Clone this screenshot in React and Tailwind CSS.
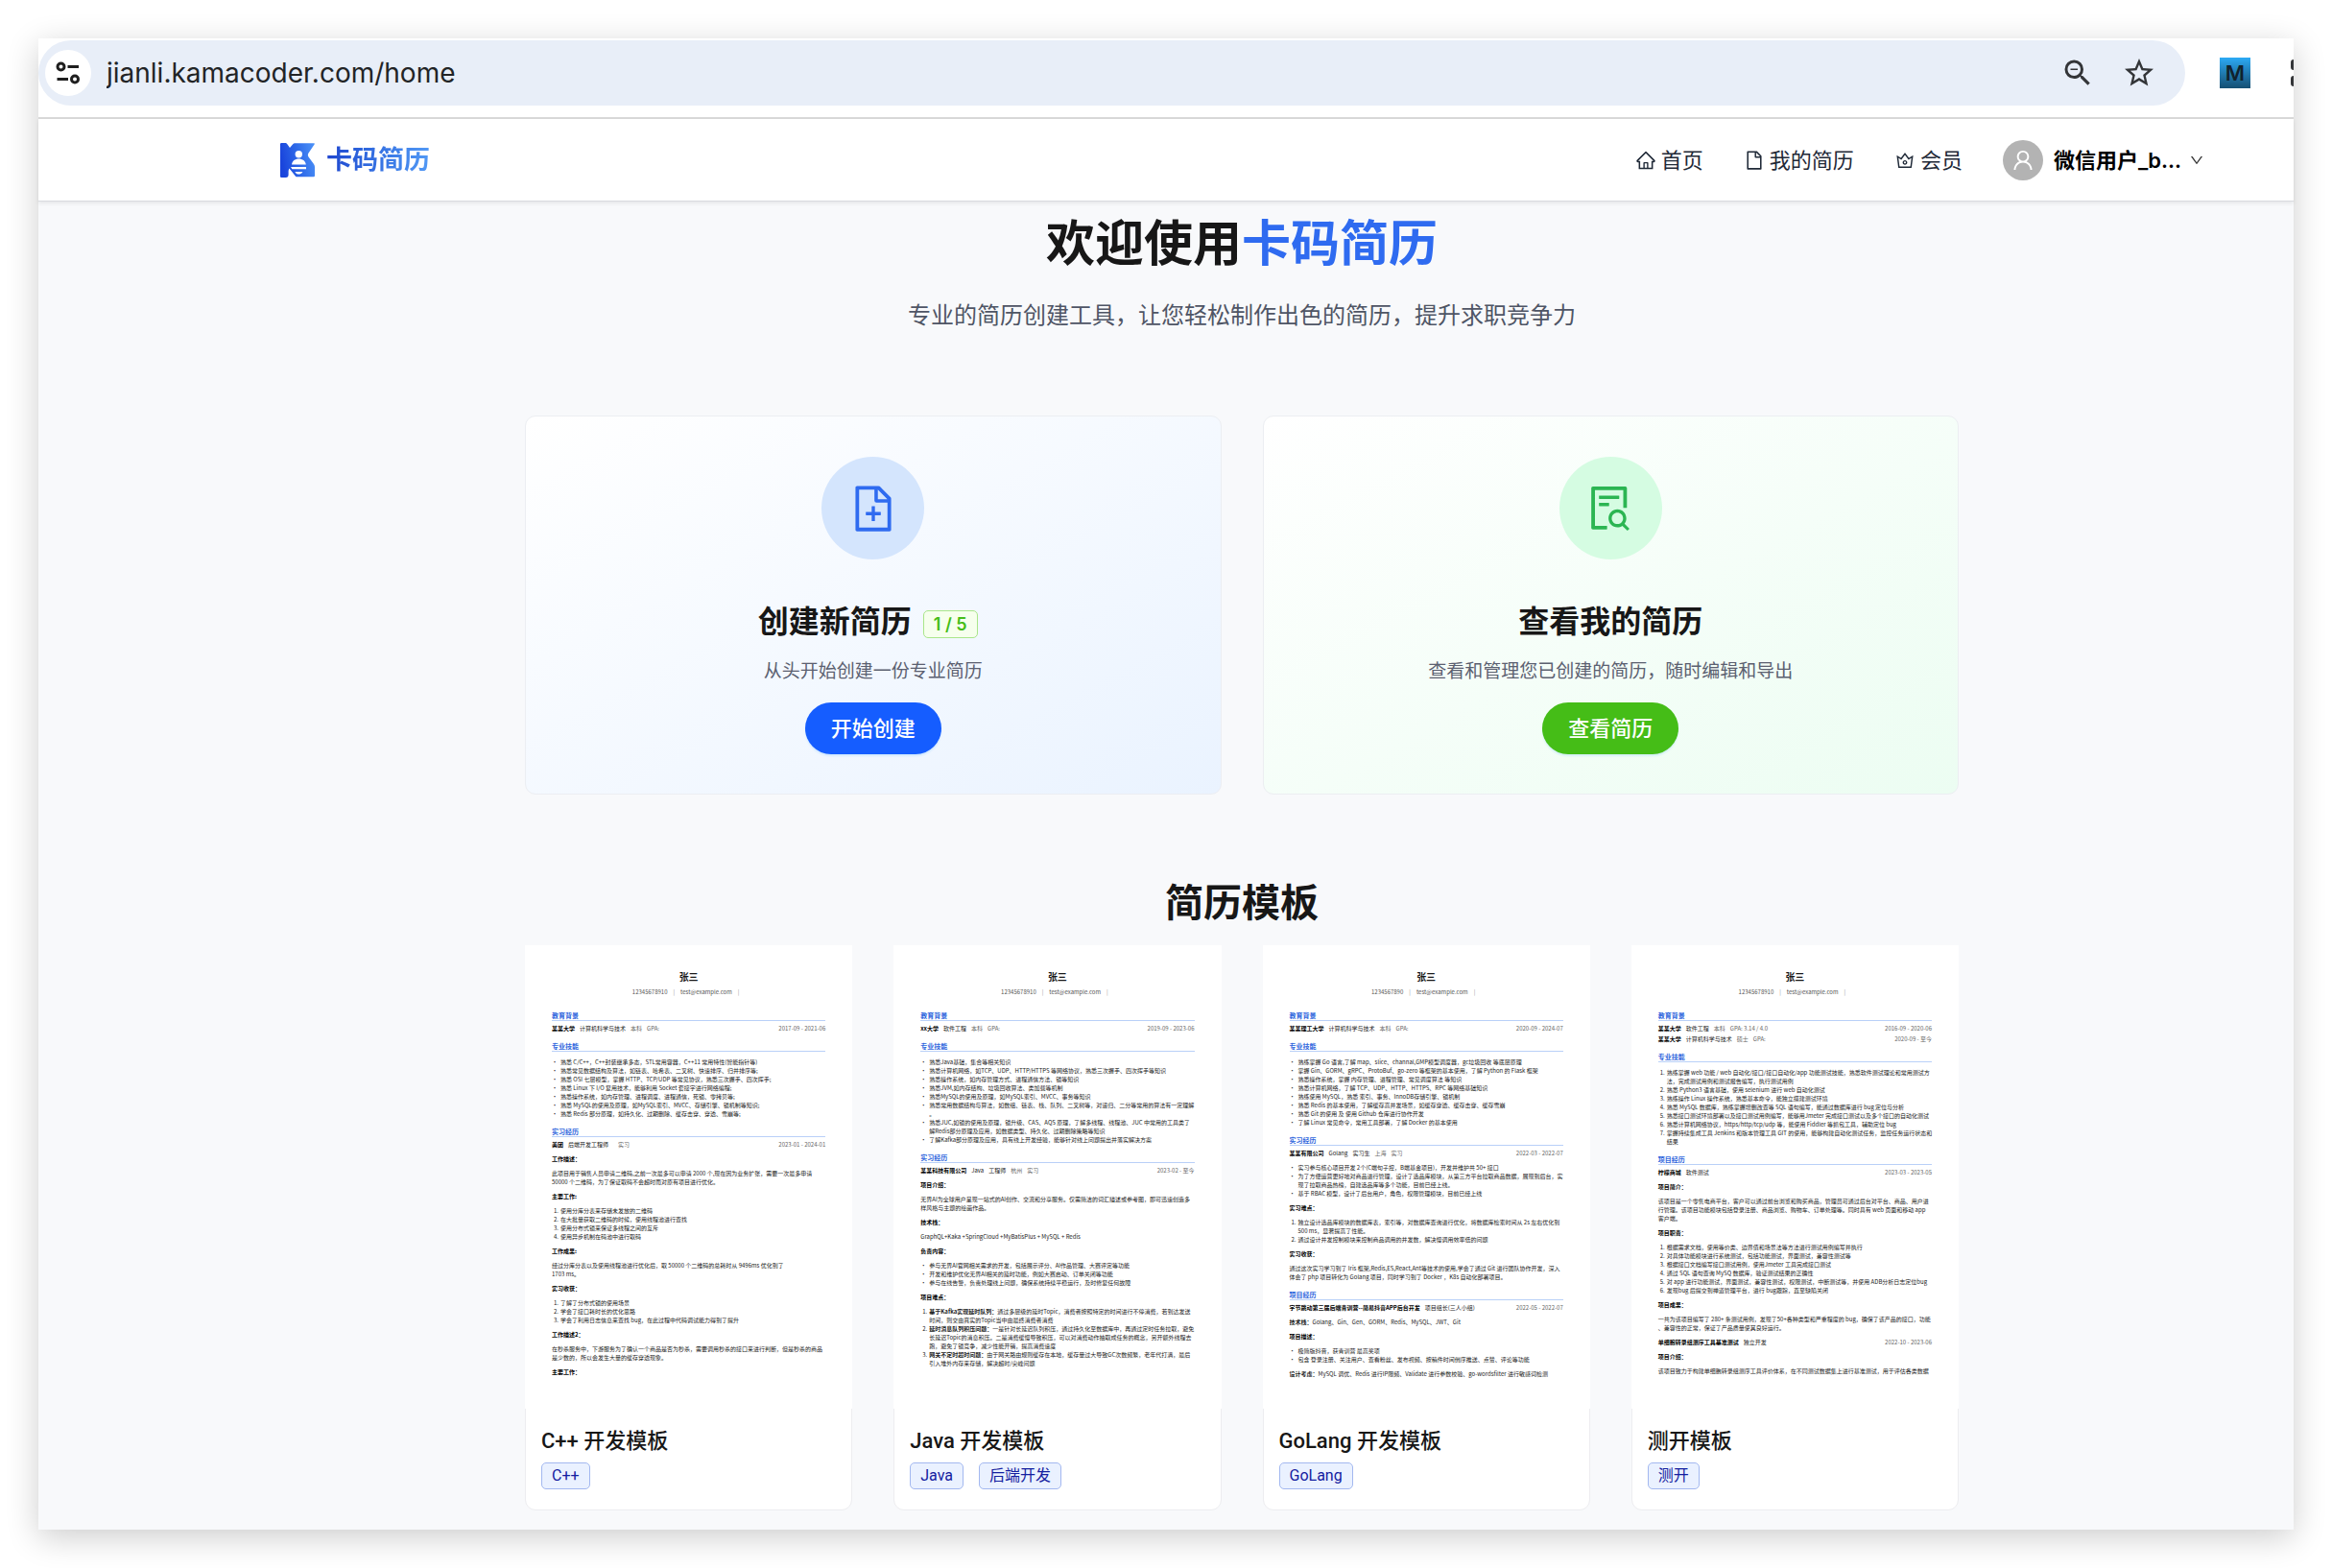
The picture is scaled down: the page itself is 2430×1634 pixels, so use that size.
import React from "react";
import {
  AiOutlineHome,
  AiOutlineFile,
  AiOutlineCrown,
  AiOutlineUser,
  AiOutlineDown,
  AiOutlineFileAdd,
  AiOutlineFileSearch,
} from "react-icons/ai";
import { MdOutlineZoomOut, MdStarBorder } from "react-icons/md";

const templates = [
  {
    name: "C++ 开发模板",
    tags: ["C++"],
    phone: "12345678910",
    sections: [
      {
        title: "教育背景",
        blocks: [
          { rows: [{ strong: "某某大学", main: ["计算机科学与技术"], soft: ["本科", "GPA:"], date: "2017-09 - 2021-06" }] },
        ],
      },
      {
        title: "专业技能",
        blocks: [
          {
            ul: [
              "熟悉 C/C++，C++封装继承多态，STL常用容器，C++11 常用特性(智能指针等)",
              "熟悉常见数据结构及算法，如链表、哈希表、二叉树、快速排序、归并排序等;",
              "熟悉 OSI 七层模型，掌握 HTTP、TCP/UDP 等常见协议，熟悉三次握手、四次挥手;",
              "熟悉 Linux 下 I/O 复用技术，能够利用 Socket 套接字进行网络编程;",
              "熟悉操作系统，如内存管理、进程调度、进程通信，死锁、零拷贝等;",
              "熟悉 MySQL的使用及原理，如MySQL索引、MVCC、存储引擎、锁机制等知识;",
              "熟悉 Redis 部分原理，如持久化、过期删除、缓存击穿、穿透、雪崩等;",
            ],
          },
        ],
      },
      {
        title: "实习经历",
        blocks: [
          { rows: [{ strong: "美团", main: ["后端开发工程师"], soft: ["", "实习"], date: "2023-01 - 2024-01" }] },
          { b: "工作描述：" },
          { p: ["此项目用于销售人员申请二维码,之前一次最多可以申请 2000 个,现在因为业务扩张，需要一次最多申请", "50000 个二维码，为了保证取码不会超时而对原有项目进行优化。"] },
          { b: "主要工作:" },
          { ol: ["使用分库分表来存储未发放的二维码", "在大批量获取二维码的时候，使用线程池进行查找", "使用分布式锁来保证多线程之间的互斥", "使用异步机制在码池中进行取码"] },
          { b: "工作成果:" },
          { p: ["经过分库分表以及使用线程池进行优化后，取 50000 个二维码的总耗时从 9496ms 优化到了", "1703 ms。"] },
          { b: "实习收获：" },
          { ol: ["了解了分布式锁的使用场景", "学会了接口耗时长的优化思路", "学会了利用日志信息来查找 bug，在此过程中代码调试能力得到了提升"] },
          { b: "工作描述2：" },
          { p: ["在秒杀服务中，下游服务为了确认一个商品是否为秒杀，需要调用秒杀的接口来进行判断，但是秒杀的商品", "是少数的，所以会发生大量的缓存穿透现象。"] },
          { b: "主要工作：" },
        ],
      },
    ],
  },
  {
    name: "Java 开发模板",
    tags: ["Java", "后端开发"],
    phone: "12345678910",
    sections: [
      {
        title: "教育背景",
        blocks: [
          { rows: [{ strong: "xx大学", main: ["软件工程"], soft: ["本科", "GPA:"], date: "2019-09 - 2023-06" }] },
        ],
      },
      {
        title: "专业技能",
        blocks: [
          {
            ul: [
              "熟悉Java基础，集合等相关知识",
              "熟悉计算机网络，如TCP、UDP、HTTP/HTTPS 等网络协议，熟悉三次握手、四次挥手等知识",
              "熟悉操作系统，如内存管理方式、进程通信方法、锁等知识",
              "熟悉JVM,如内存结构、垃圾回收算法、类加载等机制",
              "熟悉MySQL的使用及原理，如MySQL索引、MVCC、事务等知识",
              ["熟悉常用数据结构与算法，如数组、链表、栈、队列、二叉树等，对递归、二分等常用的算法有一定理解", "。"],
              ["熟悉JUC,如锁的使用及原理，锁升级、CAS、AQS 原理，了解多线程、线程池、JUC 中常用的工具类了", "解Redis部分原理及应用，如数据类型、持久化、过期删除策略等知识"],
              "了解Kafka部分原理及应用，具有线上开发经验，能够针对线上问题提出并落实解决方案",
            ],
          },
        ],
      },
      {
        title: "实习经历",
        blocks: [
          { rows: [{ strong: "某某科技有限公司", main: ["Java", "工程师"], soft: ["杭州", "实习"], date: "2023-02 - 至今" }] },
          { b: "项目介绍：" },
          { p: ["无界AI为全球用户呈现一站式的AI创作、交流和分享服务。仅需简洁的词汇描述或参考图，即可迅速创造多", "样风格与主题的绘画作品。"] },
          { b: "技术栈：" },
          { p: ["GraphQL+Kaka +SpringCloud +MyBatisPlus + MySQL + Redis"] },
          { b: "负责内容：" },
          { ul: ["参与无界AI官网相关需求的开发，包括展示评分、AI作品管理、大赛评定等功能", "开发和维护优化无界AI相关的延时功能，例如大赛启动、订单关闭等功能", "参与在线告警，负责处理线上问题，确保系统持续平稳运行，及时修复任何故障"] },
          { b: "项目难点：" },
          {
            ol: [
              { lead: "基于Kafka实现延时队列：", lines: ["通过多层级的延时Topic，消费者按照特定的时间进行不停消费，若到达发送", "时间，则交由真实的Topic当中由最终消费者消费"] },
              { lead: "延时消息队列积压问题：", lines: ["一是针对长延迟队列积压，通过持久化至数据库中，再通过定时任务拉取，避免", "长延迟Topic的消息积压。二是消费缓慢导致积压，可以对消费动作抽取成任务的概念，另开额外线程去", "跑，避免了锁竞争，减少性能开销，提高消费速度"] },
              { lead: "网关不定时超时问题：", lines: ["由于网关路由规则缓存在本地，缓存量过大导致GC次数频繁，老年代打满，最后", "引入堆外内存来存储，解决超时/尖峰问题"] },
            ],
          },
        ],
      },
    ],
  },
  {
    name: "GoLang 开发模板",
    tags: ["GoLang"],
    phone: "1234567890",
    sections: [
      {
        title: "教育背景",
        blocks: [
          { rows: [{ strong: "某某理工大学", main: ["计算机科学与技术"], soft: ["本科", "GPA:"], date: "2020-09 - 2024-07" }] },
        ],
      },
      {
        title: "专业技能",
        blocks: [
          {
            ul: [
              "熟练掌握 Go 语言,了解 map、slice、channal,GMP模型调度器，gc垃圾回收 等底层原理",
              "掌握 Gin、GORM、gRPC、ProtoBuf、go-zero 等框架的基本使用，了解 Python 的 Flask 框架",
              "熟悉操作系统，掌握 内存管理、进程管理、常见调度算法 等知识",
              "熟悉计算机网络，了解 TCP、UDP、HTTP、HTTPS、RPC 等网络基础知识",
              "熟练使用 MySQL，熟悉 索引、事务、InnoDB存储引擎、锁机制",
              "熟悉 Redis 的基本使用，了解缓存高并发场景，如缓存穿透、缓存击穿、缓存雪崩",
              "熟悉 Git 的使用 及 使用 Github 仓库进行协作开发",
              "了解 Linux 常见命令，常用工具部署，了解 Docker 的基本使用",
            ],
          },
        ],
      },
      {
        title: "实习经历",
        blocks: [
          { rows: [{ strong: "某某有限公司", main: ["Golang", "实习生"], soft: ["上海", "实习"], date: "2022-03 - 2022-07" }] },
          {
            ul: [
              "实习参与核心项目开发 2个(C端句子控，B端基金项目)，开发并维护共 50+ 接口",
              ["为了方便运营更好地对商品进行管理，设计了选品库模块，从第三方平台拉取商品数据，展现到后台，实", "现了拉取商品热榜，自建选品库等多个功能，目前已经上线。"],
              "基于 RBAC 模型，设计了后台用户，角色，权限管理模块，目前已经上线",
            ],
          },
          { b: "实习难点：" },
          { ol: [["独立设计选品库模块的数据库表，索引等，对数据库查询进行优化，将数据库检索时间从 2s 左右优化到", "500 ms，显著提高了性能。"], "通过设计并发控制模块来控制商品调用的并发数，解决慢调用效率低的问题"] },
          { b: "实习收获：" },
          { p: ["通过这次实习学习到了 Iris 框架,Redis,ES,React,Ant等技术的使用,学会了通过 Git 进行团队协作开发，深入", "体会了 php 项目转化为 Golang 项目，同时学习到了 Docker ，K8s 自动化部署项目。"] },
        ],
      },
      {
        title: "项目经历",
        blocks: [
          { rows: [{ strong: "字节跳动第三届后端青训营--简易抖音APP后台开发", main: ["项目组长(三人小组)"], soft: [], date: "2022-05 - 2022-07" }] },
          { lead: "技术栈：", p: ["Golang、Gin、Gen、GORM、Redis、MySQL、JWT、Git"] },
          { b: "项目描述：" },
          { ul: ["极简版抖音，获青训营 最高奖项", "包含 登录注册、关注用户、查看粉丝、发布视频、按稿件时间倒序推送、点赞、评论等功能"] },
          { lead: "设计考虑：", p: ["MySQL 调优、Redis 进行IP限频、Validate 进行参数校验、go-wordsfilter 进行敏感词检测"] },
        ],
      },
    ],
  },
  {
    name: "测开模板",
    tags: ["测开"],
    phone: "12345678910",
    sections: [
      {
        title: "教育背景",
        blocks: [
          {
            rows: [
              { strong: "某某大学", main: ["软件工程"], soft: ["本科", "GPA: 3.14 / 4.0"], date: "2016-09 - 2020-06" },
              { strong: "某某大学", main: ["计算机科学与技术"], soft: ["硕士", "GPA:"], date: "2020-09 - 至今" },
            ],
          },
        ],
      },
      {
        title: "专业技能",
        blocks: [
          {
            ol: [
              ["熟练掌握 web 功能 / web 自动化/接口/接口自动化/app 功能测试技能，熟悉软件测试理论和常用测试方", "法，完成测试用例和测试报告编写，执行测试用例"],
              "熟悉 Python3 语言基础，使用 selenium 进行 web 自动化测试",
              "熟练操作 Linux 操作系统，熟悉基本命令，能独立搭建测试环境",
              "熟悉 MySQL 数据库，熟练掌握增删改查等 SQL 语句编写，能通过数据库进行 bug 定位与分析",
              "熟悉接口测试环境部署以及接口测试用例编写，能够用Jmeter 完成接口测试以及多个接口的自动化测试",
              "熟悉计算机网络协议，https/http/tcp/udp 等，能使用 Fiddler 等抓包工具，辅助定位 bug",
              ["掌握持续集成工具 Jenkins 和版本管理工具 GIT 的使用，能够构建自动化测试任务，监控任务运行状态和", "结果"],
            ],
          },
        ],
      },
      {
        title: "项目经历",
        blocks: [
          { rows: [{ strong: "柠檬商城", main: ["软件测试"], soft: [], date: "2023-03 - 2023-05" }] },
          { b: "项目简介：" },
          { p: ["该项目是一个零售电商平台，客户可以通过前台浏览和购买商品，管理员可通过后台对平台、商品、用户进", "行管理。该项目功能模块包括登录注册、商品浏览、购物车、订单处理等。同时具有 web 页面和移动 app", "客户端。"] },
          { b: "项目职责：" },
          {
            ol: [
              "根据需求文档，使用等价类、边界值和场景法等方法进行测试用例编写并执行",
              "对具体功能模块进行系统测试，包括功能测试，界面测试，兼容性测试等",
              "根据接口文档编写接口测试用例，使用Jmeter 工具完成接口测试",
              "通过 SQL 语句查询 MySQ 数据库，验证测试结果的正确性",
              "对 app 进行功能测试，界面测试，兼容性测试，权限测试，中断测试等，并使用 ADB分析日志定位bug",
              "发现bug 后提交到禅道管理平台，进行 bug跟踪，直至缺陷关闭",
            ],
          },
          { b: "项目成果：" },
          { p: ["一共为该项目编写了 280+ 条测试用例，发现了50+各种类型和严重程度的 bug，确保了该产品的接口，功能", "、兼容性的正常，保证了产品质量使其良好运行。"] },
          { rows: [{ strong: "单细胞转录组测序工具基准测试", main: ["独立开发"], soft: [], date: "2022-10 - 2023-06" }] },
          { b: "项目介绍：" },
          { p: ["该项目致力于构建单细胞转录组测序工具评价体系，在不同测试数据集上进行基准测试，用于评估各类数据"] },
        ],
      },
    ],
  },
];

function Lines({ lines, lead }) {
  return lines.map((line, i) => (
    <span key={i} className="block">
      {i === 0 && lead ? <strong className="font-bold">{lead}</strong> : null}
      {line}
    </span>
  ));
}

function List({ items, ordered }) {
  const Tag = ordered ? "ol" : "ul";
  return (
    <Tag>
      {items.map((item, i) => {
        const lead = item.lead;
        const lines = item.lines || (Array.isArray(item) ? item : [item]);
        return (
          <li key={i} className="flex">
            {ordered ? (
              <span className="w-[9px] shrink-0 pl-[2px]">{i + 1}.</span>
            ) : (
              <span className="w-[9px] shrink-0">•</span>
            )}
            <div>
              <Lines lines={lines} lead={lead} />
            </div>
          </li>
        );
      })}
    </Tag>
  );
}

function Block({ block }) {
  if (block.rows) {
    return (
      <div className="flex flex-col gap-0.5">
        {block.rows.map((r, i) => (
          <div key={i} className="flex justify-between">
            <div className="flex gap-[5px]">
              <strong className="font-bold text-black">{r.strong}</strong>
              {r.main.map((m) => (
                <span key={m}>{m}</span>
              ))}
              {r.soft.map((m, k) => (
                <span key={k} className="text-[#666666]">{m}</span>
              ))}
            </div>
            <span className="text-[#666666]">{r.date}</span>
          </div>
        ))}
      </div>
    );
  }
  if (block.b) return <h5 className="font-bold text-black">{block.b}</h5>;
  if (block.ul) return <List items={block.ul} />;
  if (block.ol) return <List items={block.ol} ordered />;
  return (
    <p>
      <Lines lines={block.p} lead={block.lead} />
    </p>
  );
}

function Resume({ data }) {
  return (
    <div className="-mx-px -mt-px aspect-[342/484] overflow-hidden bg-white px-7 pt-[26px] font-['Noto_Sans_CJK_SC',sans-serif] text-[6px] leading-[9px] whitespace-nowrap text-[#1a1a1a]">
      <p className="text-center text-[10px] leading-[14px] font-bold">张三</p>
      <div className="mt-1 flex justify-center gap-[6px] text-[#555555]">
        <span>{data.phone}</span>
        <span className="text-[#999999]">|</span>
        <span>test@example.com</span>
        <span className="text-[#999999]">|</span>
        <span />
      </div>
      <div className="mt-4 flex flex-col gap-[10px]">
        {data.sections.map((s) => (
          <section key={s.title}>
            <h4 className="border-b border-[#b9d0f8] text-[7px] leading-[9px] font-bold text-[#2f66dd]">{s.title}</h4>
            <div className={s.blocks[0].rows ? "flex flex-col gap-[6px] pt-[3px]" : "flex flex-col gap-[6px] pt-[6px]"}>
              {s.blocks.map((b, i) => (
                <Block key={i} block={b} />
              ))}
            </div>
          </section>
        ))}
      </div>
    </div>
  );
}

function TemplateCard({ data }) {
  return (
    <article className="rounded-b-[11px] border border-[#ededf0] bg-white font-[Roboto,'Noto_Sans_CJK_SC',sans-serif]">
      <Resume data={data} />
      <div className="px-4 pt-[18px] pb-[21px]">
        <h3 className="text-[22px] leading-8 font-medium text-[#171717]">{data.name}</h3>
        <div className="mt-[6px] flex gap-4">
          {data.tags.map((t) => (
            <span key={t} className="rounded-[5px] border border-[#a3b8f0] bg-[#eaf1ff] px-[10px] text-[16px] leading-[26px] text-[#1420a0]">
              {t}
            </span>
          ))}
        </div>
      </div>
    </article>
  );
}

function Logo() {
  return (
    <svg viewBox="0 0 36 36" className="size-9" aria-hidden="true">
      <defs>
        <linearGradient id="logo-fill" x1="0" y1="0.3" x2="1" y2="0.1">
          <stop offset="0" stopColor="#1a45dc" />
          <stop offset="0.5" stopColor="#2f6be9" />
          <stop offset="1" stopColor="#4c92f8" />
        </linearGradient>
      </defs>
      <path
        fill="url(#logo-fill)"
        d="M0 1.2Q0 0 1.2 0H5.5Q6.5 0 7.2.9L10 5L13.2 1.2Q14 .3 15 .3H35Q36.5.3 35.6 1.6L29.5 10.5Q28.2 12.5 29.5 14.5L35 22Q36 23.5 36 25V34Q36 35.3 34.8 35.3H17.5Q16.5 35.3 15.8 34.4L9.5 26.5Q8.6 28 8.6 29.5V33Q8.6 36 5.8 36H1.2Q0 36 0 34.8Z"
      />
      <circle cx="19.3" cy="11.8" r="3.7" fill="#fff" />
      <path fill="#fff" d="M12 22.6C12.4 18.8 15.4 16.6 19.3 16.6S26.4 18.8 26.8 22.6Z" />
      <path fill="#fff" d="M11 25H27V27.2H12.4ZM15.4 30H23.4Q22.8 32 20.4 32.4H18Q16 32 15.4 30Z" />
    </svg>
  );
}

function BrowserBar() {
  return (
    <div className="flex h-[84px] items-start justify-between border-b-2 border-[#d9d9d9] bg-white pt-[2px]">
      <div className="flex h-[68px] flex-1 items-center rounded-full bg-[#e8eef8] pr-[30px] pl-[7px]">
        <button type="button" aria-label="网站信息" className="flex size-12 items-center justify-center rounded-full bg-white">
          <svg viewBox="0 0 26 24" className="h-6 w-[26px]" fill="none" stroke="#1f1f1f" strokeWidth="3" aria-hidden="true">
            <circle cx="5.5" cy="5.5" r="3.5" />
            <path d="M12.5 5.5H24M1.5 18.5H13" />
            <circle cx="20" cy="18.5" r="3.5" />
          </svg>
        </button>
        <input
          type="text"
          aria-label="地址"
          defaultValue="jianli.kamacoder.com/home"
          className="ml-4 min-w-0 flex-1 bg-transparent text-[28px] leading-9 text-[#222426] outline-none"
        />
        <button type="button" aria-label="缩小" className="mr-7 text-[#333538]">
          <MdOutlineZoomOut className="size-9" />
        </button>
        <button type="button" aria-label="收藏" className="text-[#333538]">
          <MdStarBorder className="size-9" />
        </button>
      </div>
      <div className="flex h-[68px] w-[113px] items-center justify-between pl-9">
        <span className="flex size-8 items-center justify-center bg-linear-to-b from-[#2caaf5] to-[#154f73] text-[22px] leading-8 font-semibold text-[#10222e]">M</span>
        <svg viewBox="0 0 3 28" className="h-7 w-[3px]" fill="#333538" aria-hidden="true">
          <path d="M3 0Q0 0 0 3V8Q0 11 3 11ZM3 17Q0 17 0 20V25Q0 28 3 28Z" />
        </svg>
      </div>
    </div>
  );
}

function SiteHeader() {
  return (
    <header className="relative flex h-[86px] items-center justify-between border-b border-[#d9dbe0] bg-white pr-[93px] pl-[252px] shadow-[0_2px_4px_rgba(0,0,0,0.08)]">
      <a href="#home" className="flex items-center gap-3">
        <Logo />
        <span className="bg-linear-to-r from-[#2046cf] to-[#5299f5] bg-clip-text text-[27px] leading-9 font-bold text-transparent">卡码简历</span>
      </a>
      <nav className="flex items-center text-[22px] leading-8 text-[#1f2937]">
        <a href="#home" className="mr-[42px] flex items-center gap-[5px]">
          <AiOutlineHome className="size-[22px]" />
          首页
        </a>
        <a href="#resumes" className="mr-[42px] flex items-center gap-[5px]">
          <AiOutlineFile className="size-[22px]" />
          我的简历
        </a>
        <a href="#member" className="mr-[42px] flex items-center gap-[5px]">
          <AiOutlineCrown className="size-[22px]" />
          会员
        </a>
        <button type="button" className="flex items-center font-semibold text-black">
          <span className="mr-[11px] flex size-[42px] items-center justify-center rounded-full bg-[#b3b3b3] text-white">
            <AiOutlineUser className="size-[26px]" />
          </span>
          微信用户_b...
          <AiOutlineDown className="ml-2 size-4 text-[#333333]" />
        </button>
      </nav>
    </header>
  );
}

export default function App() {
  return (
    <div className="flex min-h-screen flex-col bg-white p-10 font-[Inter,'Noto_Sans_CJK_SC',sans-serif]">
      <div className="flex-1 bg-[#f8f9fb] shadow-[0_8px_32px_rgba(0,0,0,0.2)]">
        <BrowserBar />
        <SiteHeader />
        <main className="pb-5 pl-[158px]">
          <div className="mx-auto w-full max-w-[1494px]">
            <h1 className="pt-[11px] text-center text-[51px] leading-[66px] font-bold text-[#171717]">
              欢迎使用<span className="text-[#2f6bf0]">卡码简历</span>
            </h1>
            <p className="mt-[25px] text-center text-[24px] leading-[34px] text-[#4f5565]">专业的简历创建工具，让您轻松制作出色的简历，提升求职竞争力</p>

            <div className="mt-[87px] grid grid-cols-2 gap-[43px]">
              <section className="flex flex-col items-center rounded-[11px] border border-[#eceef2] bg-linear-to-br from-white to-[#eaf3ff] pt-[42px] pb-[41px]">
                <div className="flex size-[107px] items-center justify-center rounded-full bg-[#d4e5fd] text-[#2f6bf0]">
                  <AiOutlineFileAdd className="size-[54px]" />
                </div>
                <h2 className="mt-[43px] flex items-center gap-3 text-[32px] leading-[44px] font-bold text-[#171717]">
                  创建新简历
                  <span className="mt-1 mr-[11px] rounded-[5px] border border-[#a9e68a] bg-[#f6ffed] px-[10px] text-[18px] leading-[27px] font-semibold text-[#45bd17]">1 / 5</span>
                </h2>
                <p className="mt-4 text-[19px] leading-7 text-[#5b6070]">从头开始创建一份专业简历</p>
                <button type="button" className="mt-[18px] h-[54px] rounded-full bg-[#155dff] px-[27px] text-[22px] leading-8 font-medium text-white shadow-[0_2px_2px_rgba(5,145,255,0.12)]">
                  开始创建
                </button>
              </section>
              <section className="flex flex-col items-center rounded-[11px] border border-[#eceef2] bg-linear-to-br from-white to-[#ecfdf2] pt-[42px] pb-[41px]">
                <div className="flex size-[107px] items-center justify-center rounded-full bg-[#d5fce2] text-[#2bb552]">
                  <AiOutlineFileSearch className="size-[54px]" />
                </div>
                <h2 className="mt-[43px] text-[32px] leading-[44px] font-bold text-[#171717]">查看我的简历</h2>
                <p className="mt-4 text-[19px] leading-7 text-[#5b6070]">查看和管理您已创建的简历，随时编辑和导出</p>
                <button type="button" className="mt-[18px] h-[54px] rounded-full bg-[#45bd17] px-[27px] text-[22px] leading-8 font-medium text-white shadow-[0_2px_2px_rgba(5,145,255,0.12)]">
                  查看简历
                </button>
              </section>
            </div>

            <h2 className="mt-[85px] text-center text-[40px] leading-[56px] font-bold text-[#171717]">简历模板</h2>
            <div className="mt-4 grid grid-cols-4 gap-[43px]">
              {templates.map((t) => (
                <TemplateCard key={t.name} data={t} />
              ))}
            </div>
          </div>
        </main>
      </div>
    </div>
  );
}
